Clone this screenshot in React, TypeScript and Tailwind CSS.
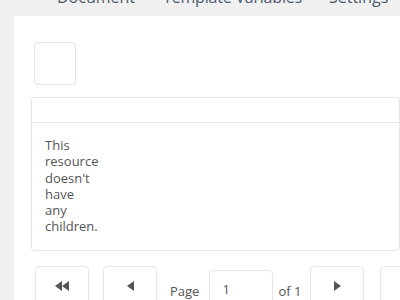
import React from "react";

const font = { fontFamily: '"Open Sans", "Noto Sans", sans-serif' };

export default function App() {
  return (
    <div className="w-[400px] h-[300px] overflow-hidden bg-[#f0f0f0] relative" style={font}>
      <div className="h-[16px] relative overflow-hidden">
        <div className="absolute top-[-13px] left-[57px] flex text-[16px] leading-[20px] text-[#4b5a6a] whitespace-nowrap">
          <span>Document</span>
          <span className="ml-[28px] tracking-[-0.2px]">Template Variables</span>
          <span className="ml-[27px]">Settings</span>
        </div>
      </div>
      <div className="ml-[14px] bg-white rounded-tl-[3px] h-[400px] pt-[26px]">
        <div className="ml-[20px] w-[42px] h-[43px] border border-[#e3e3e3] rounded-[4px]" />
        <div className="ml-[17px] mt-[12px] border border-[#e6e6e6] rounded-[3px] h-[154px]">
          <div className="h-[25px] border-b border-[#e6e6e6]" />
          <div className="pl-[13px] pt-[14px] w-[66px] text-[13px] leading-[16.3px] text-[#555]">
            This resource doesn't have any children.
          </div>
        </div>
        <div className="flex items-start ml-[21px] mt-[15px] text-[13px] text-[#555] whitespace-nowrap w-[600px]">
          <div className="shrink-0 w-[54px] h-[44px] border border-[#e6e6e6] rounded-[4px] flex items-center justify-center pb-[4px]">
            <svg width="14" height="10" viewBox="0 0 14 10"><path d="M7 0L0 5L7 10Z M14 0L7 5L14 10Z" fill="#555" /></svg>
          </div>
          <div className="shrink-0 ml-[14px] w-[54px] h-[44px] border border-[#e6e6e6] rounded-[4px] flex items-center justify-center pb-[4px]">
            <svg width="7" height="10" viewBox="0 0 7 10"><path d="M7 0L0 5L7 10Z" fill="#555" /></svg>
          </div>
          <span className="shrink-0 ml-[13px] mt-[16px]">Page</span>
          <div className="shrink-0 ml-[10px] mt-[4px] w-[64px] h-[40px] border border-[#e6e6e6] rounded-[4px] pl-[12px] pt-[9px]">1</div>
          <span className="shrink-0 ml-[5px] mt-[16px]">of 1</span>
          <div className="shrink-0 ml-[9px] w-[54px] h-[44px] border border-[#e6e6e6] rounded-[4px] flex items-center justify-center pb-[4px]">
            <svg width="7" height="10" viewBox="0 0 7 10"><path d="M0 0L7 5L0 10Z" fill="#555" /></svg>
          </div>
          <div className="shrink-0 ml-[16px] w-[54px] h-[44px] border border-[#e6e6e6] rounded-[4px] flex items-center justify-center pb-[4px]">
            <svg width="10" height="10" viewBox="0 0 10 10"><path d="M0 0L7 5L0 10Z M7 0H10V10H7Z" fill="#555" /></svg>
          </div>
        </div>
      </div>
    </div>
  );
}
